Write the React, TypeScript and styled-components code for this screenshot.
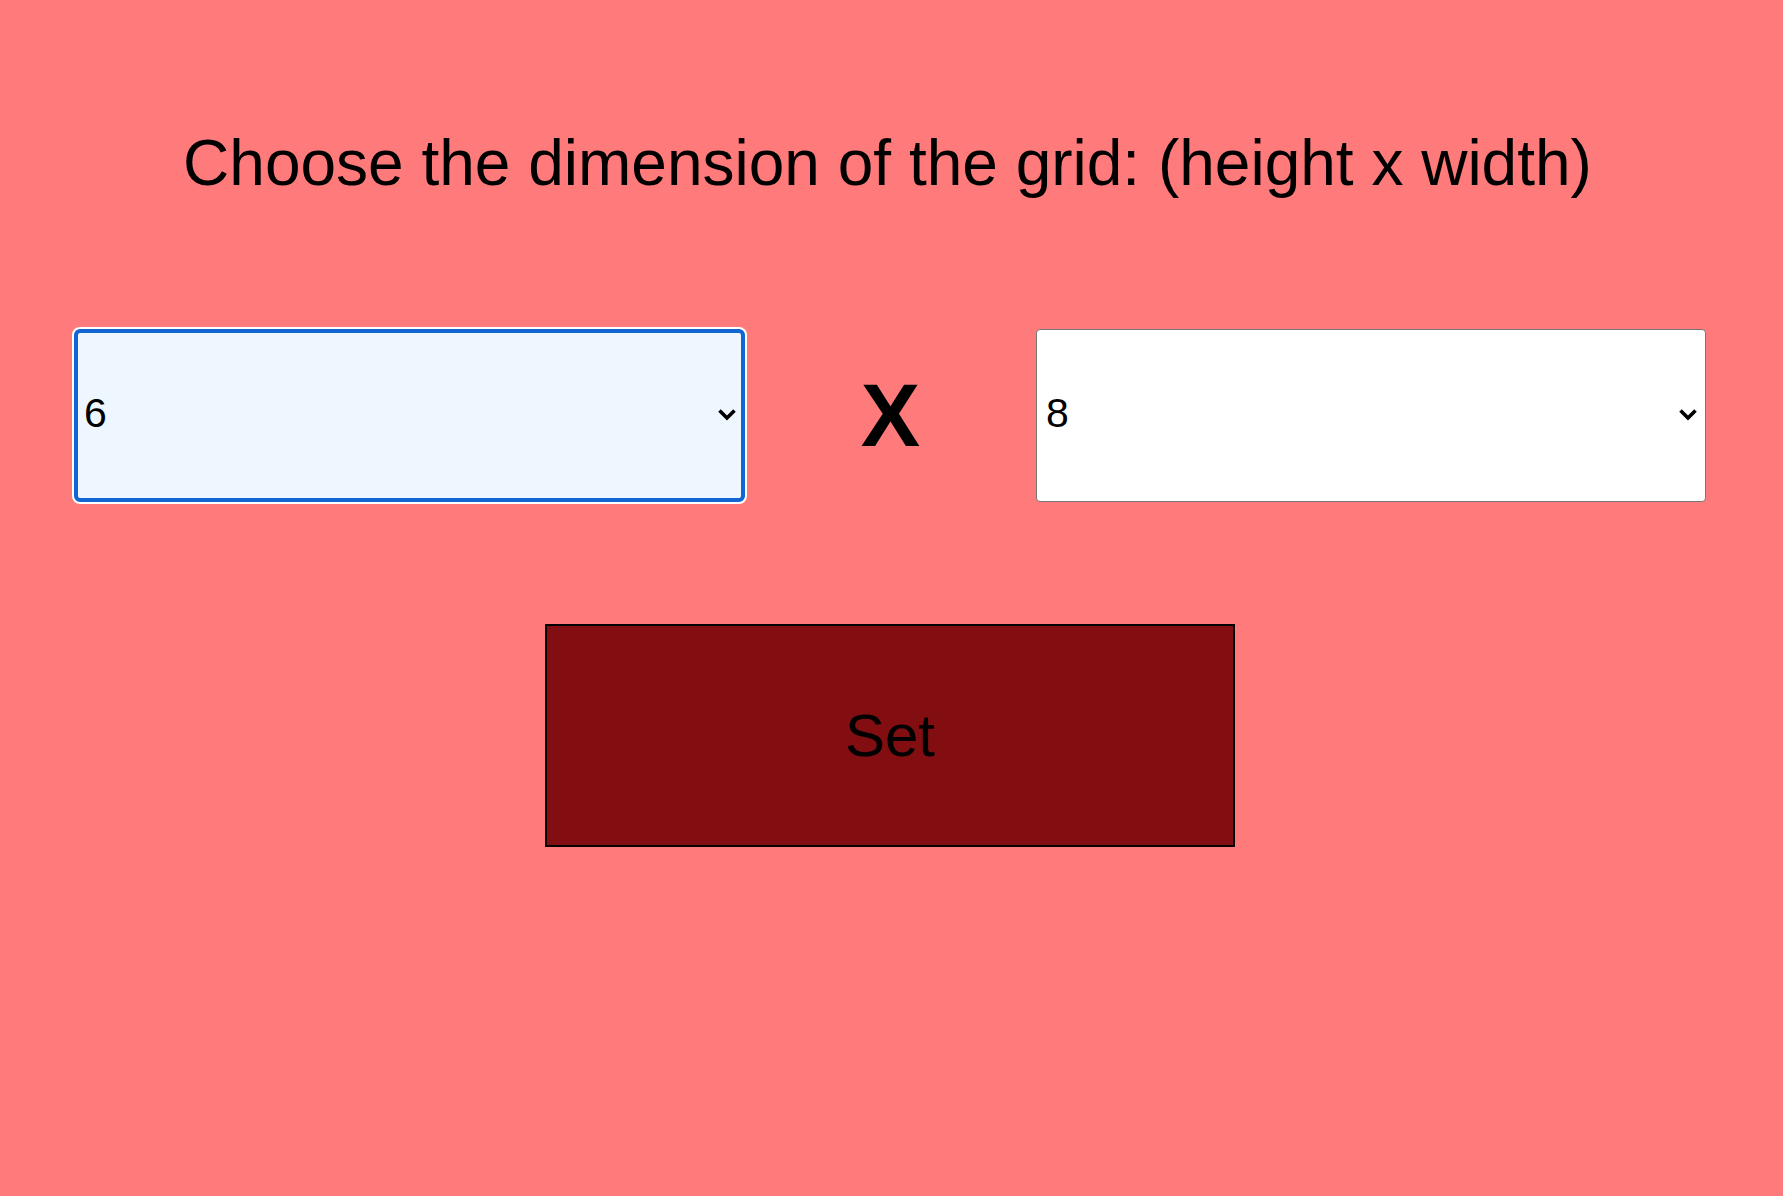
import React from "react";
import styled, { createGlobalStyle, css } from "styled-components";

const GlobalStyle = createGlobalStyle`
  html, body {
    margin: 0;
    padding: 0;
    background: #ff7a7a;
    font-family: "Liberation Sans", Arial, sans-serif;
  }
  #root {
    min-height: 100vh;
    background: #ff7a7a;
  }
`;

const Page = styled.main`
  display: flex;
  flex-direction: column;
  align-items: stretch;
  padding-top: 126px;
  min-height: 100vh;
  box-sizing: border-box;
`;

const Title = styled.h1`
  margin: 0;
  font-family: "Liberation Sans", Arial, sans-serif;
  font-weight: 400;
  font-size: 64px;
  line-height: 74px;
  color: #000;
  text-align: center;
  padding-right: 8px;
`;

const DimensionRow = styled.div`
  display: grid;
  grid-template-columns: 671px 1fr 670px;
  align-items: center;
  margin-top: 129px;
  padding: 0 77px 0 74px;
`;

const SelectWrap = styled.div`
  position: relative;
  height: 173px;
`;

const Select = styled.select<{ $focused?: boolean }>`
  appearance: none;
  -webkit-appearance: none;
  width: 100%;
  height: 100%;
  box-sizing: border-box;
  margin: 0;
  padding: 0 40px 5px 9px;
  font-family: "Liberation Sans", Arial, sans-serif;
  font-size: 41px;
  color: #000;
  background: #fff;
  border: 1px solid #767676;
  border-radius: 4px;
  outline: none;
  ${(p) =>
    p.$focused &&
    css`
      background: #eef6ff;
      border: 4px solid #1166d2;
      border-radius: 6px;
      padding-left: 6px;
      box-shadow: 0 0 0 2px #ffffff;
    `}
`;

const Chevron = styled.svg`
  position: absolute;
  right: 8px;
  top: 50%;
  width: 20px;
  height: 13px;
  margin-top: -8px;
  pointer-events: none;
`;

const Times = styled.span`
  justify-self: center;
  font-family: "Liberation Sans", Arial, sans-serif;
  font-weight: 700;
  font-size: 89px;
  line-height: 1;
  color: #000;
`;

const ButtonRow = styled.div`
  display: flex;
  justify-content: center;
  margin-top: 122px;
  padding-right: 3px;
`;

const SetButton = styled.button`
  width: 690px;
  height: 223px;
  box-sizing: border-box;
  background: #820e12;
  border: 2px solid #000;
  border-radius: 0;
  font-family: "Liberation Sans", Arial, sans-serif;
  font-size: 60px;
  color: #000;
  cursor: pointer;
`;

const ChevronIcon = () => (
  <Chevron viewBox="0 0 20 13">
    <path d="M2.5 2.5 L10 10 L17.5 2.5" fill="none" stroke="#000" strokeWidth="3.6" />
  </Chevron>
);

const DimSelect = ({ value, focused }: { value: number; focused?: boolean }) => (
  <SelectWrap>
    <Select $focused={focused} defaultValue={value}>
      {Array.from({ length: 20 }, (_, i) => i + 1).map((n) => (
        <option key={n} value={n}>
          {n}
        </option>
      ))}
    </Select>
    <ChevronIcon />
  </SelectWrap>
);

export default function App() {
  return (
    <>
      <GlobalStyle />
      <Page>
        <Title>Choose the dimension of the grid: (height x width)</Title>
        <DimensionRow>
          <DimSelect value={6} focused />
          <Times>X</Times>
          <DimSelect value={8} />
        </DimensionRow>
        <ButtonRow>
          <SetButton>Set</SetButton>
        </ButtonRow>
      </Page>
    </>
  );
}
